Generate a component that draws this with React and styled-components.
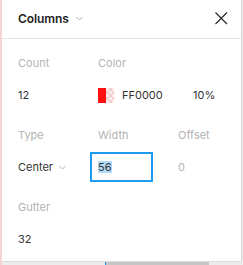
import React from 'react';
import styled, { createGlobalStyle } from 'styled-components';

const Global = createGlobalStyle`
  html, body { margin: 0; padding: 0; }
  body {
    font-family: Inter, "Noto Sans", sans-serif;
    background: #ffffff;
  }
`;

const Backdrop = styled.div`
  width: 243px;
  height: 265px;
  box-sizing: border-box;
  border-left: 2px solid #f4d4d4;
  background: #ececec;
  display: flex;
  flex-direction: column;
  overflow: hidden;
`;

const Panel = styled.div`
  width: 240px;
  height: 262px;
  box-sizing: border-box;
  background: #fff;
  border-right: 1px solid #d6d6d6;
  border-bottom: 1px solid #dcdcdc;
  border-bottom-right-radius: 2px;
  display: flex;
  flex-direction: column;
`;

const Header = styled.div`
  height: 39px;
  box-sizing: border-box;
  border-bottom: 1px solid #e5e5e5;
  display: flex;
  align-items: center;
  padding: 0 13px 1px 16px;
`;

const Title = styled.span`
  font-size: 12px;
  font-weight: 600;
  color: #222;
  letter-spacing: -0.1px;
`;

const Chevron = styled.svg`
  margin-left: ${p => p.$gap || 6}px;
  flex: none;
`;

const Close = styled.svg`
  margin-left: auto;
  flex: none;
`;

const Body = styled.div`
  padding: 8px 16px 0;
  display: flex;
  flex-direction: column;
  gap: 8px;
`;

const Section = styled.div`
  display: grid;
  grid-template-columns: 80px 80px 1fr;
  grid-auto-rows: 32px;
`;

const Label = styled.div`
  font-size: 11px;
  line-height: 32px;
  color: #b3b3b3;
`;

const Value = styled.div`
  font-size: 11px;
  line-height: 32px;
  color: ${p => (p.$muted ? '#b3b3b3' : '#333')};
  display: flex;
  align-items: center;
  grid-column: ${p => p.$span || 'auto'};
`;

const Swatch = styled.div`
  width: 16px;
  height: 15px;
  display: flex;
  flex: none;
  margin-right: 8px;
`;

const SwatchSolid = styled.div`
  width: 8px;
  background: #ff1010;
`;

const SwatchAlpha = styled.div`
  width: 8px;
  background: repeating-conic-gradient(#f4cfcf 0 25%, #ffeaea 0 50%) 0 0 / 6px 6px;
`;

const Hex = styled.span`
  width: 71px;
  flex: none;
`;

const Input = styled.div`
  margin-left: -8px;
  width: 63px;
  height: 30px;
  box-sizing: border-box;
  border: 2px solid #1b9cf2;
  padding-left: 6px;
  display: flex;
  align-items: center;
`;

const Selected = styled.span`
  background: #b2dcfa;
  line-height: 12px;
  color: #333;
`;

const CanvasStrip = styled.div`
  height: 3px;
  display: flex;
  padding-left: 103px;
`;

const CanvasBar = styled.div`
  width: 103px;
  background: #c6c6c6;
  border-left: 1px solid #1b9cf2;
`;

const Down = ({ gap }) => (
  <Chevron $gap={gap} width="7" height="5" viewBox="0 0 7 5">
    <path d="M0.5 1 L3.5 4 L6.5 1" fill="none" stroke="#b3b3b3" strokeWidth="1" />
  </Chevron>
);

export default function App() {
  return (
    <>
      <Global />
      <Backdrop>
        <Panel>
          <Header>
            <Title>Columns</Title>
            <Down gap={7} />
            <Close width="13" height="13" viewBox="0 0 13 13">
              <path d="M0.5 0.5 L12 12 M12 0.5 L0.5 12" stroke="#222" strokeWidth="1.1" />
            </Close>
          </Header>
          <Body>
            <Section>
              <Label>Count</Label>
              <Label>Color</Label>
              <Label />
              <Value>12</Value>
              <Value $span="2 / 4">
                <Swatch>
                  <SwatchSolid />
                  <SwatchAlpha />
                </Swatch>
                <Hex>FF0000</Hex>
                <span>10%</span>
              </Value>
            </Section>
            <Section>
              <Label>Type</Label>
              <Label>Width</Label>
              <Label>Offset</Label>
              <Value>
                Center
                <Down gap={6} />
              </Value>
              <Value>
                <Input>
                  <Selected>56</Selected>
                </Input>
              </Value>
              <Value $muted>0</Value>
            </Section>
            <Section>
              <Label>Gutter</Label>
              <Label />
              <Label />
              <Value>32</Value>
            </Section>
          </Body>
        </Panel>
        <CanvasStrip>
          <CanvasBar />
        </CanvasStrip>
      </Backdrop>
    </>
  );
}
